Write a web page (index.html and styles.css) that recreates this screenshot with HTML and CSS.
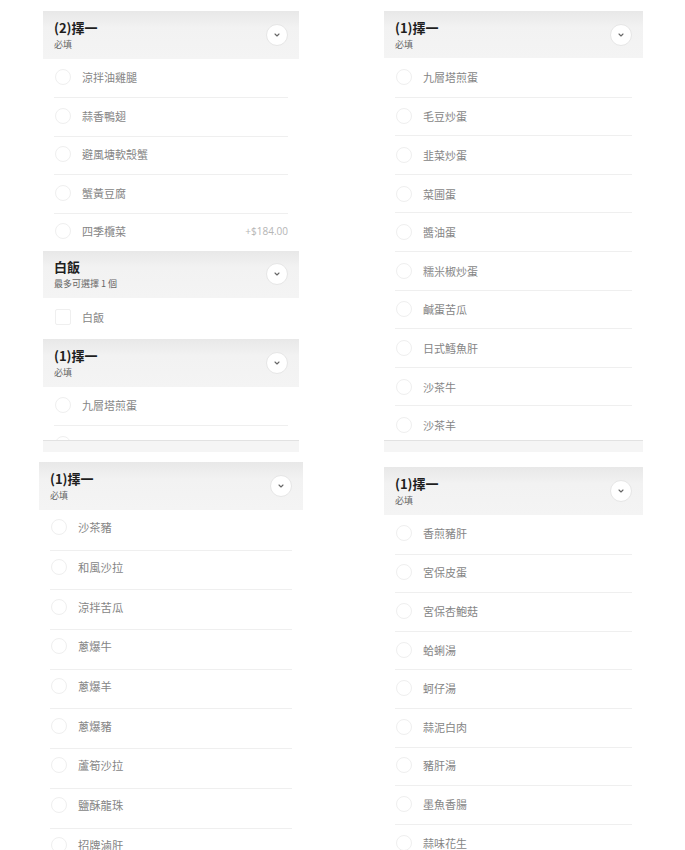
FILE: index.html
```html
<!DOCTYPE html>
<html lang="zh-Hant">
<head>
    <meta charset="UTF-8">
    <meta name="viewport" content="width=device-width, initial-scale=1.0">
    <title>套餐選項</title>
    <link rel="stylesheet" href="styles.css">
</head>
<body>
    <div class="board">
        <!-- Left column -->
        <div class="col">
            <section class="shot shot-a">
                <div class="shot-body">
                    <div class="group">
                        <div class="group-head">
                            <div class="group-titles">
                                <div class="group-title">(2)擇一</div>
                                <div class="group-note">必填</div>
                            </div>
                            <span class="toggle"><svg viewBox="0 0 10 10"><path d="M3 4l2 2 2-2"/></svg></span>
                        </div>
                        <ul class="options">
                            <li class="option"><span class="radio"></span><span class="option-name">涼拌油雞腿</span></li>
                            <li class="option"><span class="radio"></span><span class="option-name">蒜香鴨翅</span></li>
                            <li class="option"><span class="radio"></span><span class="option-name">避風塘軟殼蟹</span></li>
                            <li class="option"><span class="radio"></span><span class="option-name">蟹黃豆腐</span></li>
                            <li class="option"><span class="radio"></span><span class="option-name">四季欖菜</span><span class="option-price">+$184.00</span></li>
                        </ul>
                    </div>
                    <div class="group group-single">
                        <div class="group-head">
                            <div class="group-titles">
                                <div class="group-title">白飯</div>
                                <div class="group-note">最多可選擇 1 個</div>
                            </div>
                            <span class="toggle"><svg viewBox="0 0 10 10"><path d="M3 4l2 2 2-2"/></svg></span>
                        </div>
                        <ul class="options">
                            <li class="option"><span class="check"></span><span class="option-name">白飯</span></li>
                        </ul>
                    </div>
                    <div class="group">
                        <div class="group-head">
                            <div class="group-titles">
                                <div class="group-title">(1)擇一</div>
                                <div class="group-note">必填</div>
                            </div>
                            <span class="toggle"><svg viewBox="0 0 10 10"><path d="M3 4l2 2 2-2"/></svg></span>
                        </div>
                        <ul class="options">
                            <li class="option"><span class="radio"></span><span class="option-name">九層塔煎蛋</span></li>
                            <li class="option"><span class="radio"></span></li>
                        </ul>
                    </div>
                </div>
                <div class="shot-foot"></div>
            </section>

            <section class="shot shot-c">
                <div class="shot-body">
                    <div class="group">
                        <div class="group-head">
                            <div class="group-titles">
                                <div class="group-title">(1)擇一</div>
                                <div class="group-note">必填</div>
                            </div>
                            <span class="toggle"><svg viewBox="0 0 10 10"><path d="M3 4l2 2 2-2"/></svg></span>
                        </div>
                        <ul class="options">
                            <li class="option"><span class="radio"></span><span class="option-name">沙茶豬</span></li>
                            <li class="option"><span class="radio"></span><span class="option-name">和風沙拉</span></li>
                            <li class="option"><span class="radio"></span><span class="option-name">涼拌苦瓜</span></li>
                            <li class="option"><span class="radio"></span><span class="option-name">蔥爆牛</span></li>
                            <li class="option"><span class="radio"></span><span class="option-name">蔥爆羊</span></li>
                            <li class="option"><span class="radio"></span><span class="option-name">蔥爆豬</span></li>
                            <li class="option"><span class="radio"></span><span class="option-name">蘆筍沙拉</span></li>
                            <li class="option"><span class="radio"></span><span class="option-name">鹽酥龍珠</span></li>
                            <li class="option"><span class="radio"></span><span class="option-name">招牌滷肝</span></li>
                        </ul>
                    </div>
                </div>
            </section>
        </div>

        <!-- Right column -->
        <div class="col">
            <section class="shot shot-b">
                <div class="shot-body">
                    <div class="group">
                        <div class="group-head">
                            <div class="group-titles">
                                <div class="group-title">(1)擇一</div>
                                <div class="group-note">必填</div>
                            </div>
                            <span class="toggle"><svg viewBox="0 0 10 10"><path d="M3 4l2 2 2-2"/></svg></span>
                        </div>
                        <ul class="options">
                            <li class="option"><span class="radio"></span><span class="option-name">九層塔煎蛋</span></li>
                            <li class="option"><span class="radio"></span><span class="option-name">毛豆炒蛋</span></li>
                            <li class="option"><span class="radio"></span><span class="option-name">韭菜炒蛋</span></li>
                            <li class="option"><span class="radio"></span><span class="option-name">菜圃蛋</span></li>
                            <li class="option"><span class="radio"></span><span class="option-name">醬油蛋</span></li>
                            <li class="option"><span class="radio"></span><span class="option-name">糯米椒炒蛋</span></li>
                            <li class="option"><span class="radio"></span><span class="option-name">鹹蛋苦瓜</span></li>
                            <li class="option"><span class="radio"></span><span class="option-name">日式鱈魚肝</span></li>
                            <li class="option"><span class="radio"></span><span class="option-name">沙茶牛</span></li>
                            <li class="option"><span class="radio"></span><span class="option-name">沙茶羊</span></li>
                        </ul>
                    </div>
                </div>
                <div class="shot-foot"></div>
            </section>

            <section class="shot shot-d">
                <div class="shot-body">
                    <div class="group">
                        <div class="group-head">
                            <div class="group-titles">
                                <div class="group-title">(1)擇一</div>
                                <div class="group-note">必填</div>
                            </div>
                            <span class="toggle"><svg viewBox="0 0 10 10"><path d="M3 4l2 2 2-2"/></svg></span>
                        </div>
                        <ul class="options">
                            <li class="option"><span class="radio"></span><span class="option-name">香煎豬肝</span></li>
                            <li class="option"><span class="radio"></span><span class="option-name">宮保皮蛋</span></li>
                            <li class="option"><span class="radio"></span><span class="option-name">宮保杏鮑菇</span></li>
                            <li class="option"><span class="radio"></span><span class="option-name">蛤蜊湯</span></li>
                            <li class="option"><span class="radio"></span><span class="option-name">蚵仔湯</span></li>
                            <li class="option"><span class="radio"></span><span class="option-name">蒜泥白肉</span></li>
                            <li class="option"><span class="radio"></span><span class="option-name">豬肝湯</span></li>
                            <li class="option"><span class="radio"></span><span class="option-name">墨魚香腸</span></li>
                            <li class="option"><span class="radio"></span><span class="option-name">蒜味花生</span></li>
                        </ul>
                    </div>
                </div>
            </section>
        </div>
    </div>
</body>
</html>
```

FILE: styles.css
```css
body {
    margin: 0;
    padding: 0;
    background: #fff;
    color: #222;
    font-family: "Noto Sans CJK TC", "Noto Sans", sans-serif;
    height: 850px;
    overflow: hidden;
}

.board {
    display: grid;
    grid-template-columns: 342px 1fr;
}

.col {
    display: flex;
    flex-direction: column;
}

/* One phone screenshot */
.shot {
    --row: 38.5px;
    --head: 48px;
    --lift: 0px;
    display: flex;
    flex-direction: column;
    background: #fff;
}

.shot-a {
    --row: 38.4px;
    --lift: 2px;
    width: 256px;
    height: 441px;
    margin: 11px 0 0 43px;
}

.shot-a .group-single {
    --row: 41px;
    --head: 47px;
}

.shot-c {
    --row: 39.7px;
    --lift: 6px;
    width: 264px;
    margin: 10px 0 0 39px;
}

.shot-b {
    --row: 38.6px;
    --head: 47px;
    width: 259px;
    height: 441px;
    margin: 11px 0 0 42px;
}

.shot-d {
    --row: 38.6px;
    --lift: 2px;
    width: 259px;
    margin: 15px 0 0 42px;
}

.shot-body {
    flex: 1;
    overflow: hidden;
}

.shot-foot {
    height: 11px;
    border-top: 1px solid #e2e2e2;
    background: #f5f5f5;
}

/* Group header */
.group-head {
    height: var(--head);
    box-sizing: border-box;
    padding: 0 11px;
    display: flex;
    align-items: center;
    justify-content: space-between;
    background: linear-gradient(#e8e8e8 0%, #f2f2f2 35%, #f4f4f4 100%);
}

.group-title {
    font-size: 13px;
    line-height: 17px;
    font-weight: 700;
    color: #1e1e1e;
}

.group-note {
    font-size: 9px;
    line-height: 13px;
    margin-top: 2px;
    color: #666;
}

.toggle {
    width: 22px;
    height: 22px;
    border-radius: 50%;
    background: #fff;
    border: 1px solid #e6e6e6;
    box-sizing: border-box;
    display: flex;
    align-items: center;
    justify-content: center;
}

.toggle svg {
    width: 10px;
    height: 10px;
    fill: none;
    stroke: #666;
    stroke-width: 1.1;
    stroke-linecap: round;
    stroke-linejoin: round;
}

/* Options */
.options {
    list-style: none;
    margin: 0;
    padding: 0;
}

.option {
    height: var(--row);
    box-sizing: border-box;
    margin: 0 11px;
    padding: 0 0 var(--lift) 1px;
    display: flex;
    align-items: center;
    gap: 11px;
}

.option + .option {
    border-top: 1px solid #efefef;
}

.radio,
.check {
    width: 16px;
    height: 16px;
    box-sizing: border-box;
    border: 1px solid #efefef;
    flex: none;
}

.radio {
    border-radius: 50%;
}

.check {
    border-radius: 2px;
}

.option-name {
    font-size: 11px;
    color: #858585;
    flex: 1;
}

.shot-c .option-name {
    font-size: 11.3px;
}

.option-price {
    font-family: "Open Sans", "Noto Sans", sans-serif;
    font-size: 10px;
    color: #b5b5b5;
}
```
